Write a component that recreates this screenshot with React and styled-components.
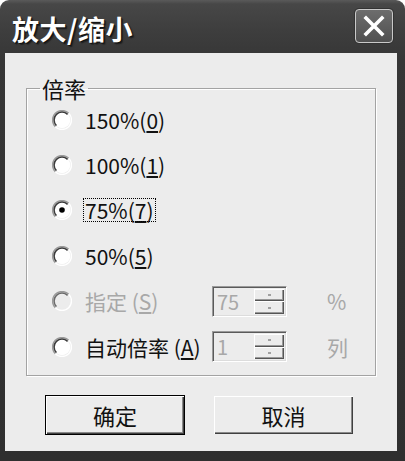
import React from "react";
import styled, { createGlobalStyle } from "styled-components";

const Global = createGlobalStyle`
  html, body { margin: 0; padding: 0; background: #fff; }
  body { font-family: "Noto Sans CJK SC", "Noto Sans", sans-serif; }
  * { box-sizing: border-box; }
`;

const Window = styled.div`
  width: 405px;
  height: 461px;
  display: flex;
  flex-direction: column;
  border-radius: 9px 9px 0 0;
  background: linear-gradient(#5a5a5a 0px, #474747 4px, #3e3e3e 30px, #363636 60px, #2f2f2f 100%);
  overflow: hidden;
`;

const TitleBar = styled.div`
  height: 53px;
  flex: none;
  display: flex;
  align-items: center;
  justify-content: space-between;
  padding: 0 12px 0 12px;
`;

const Title = styled.div`
  color: #fff;
  font-weight: 700;
  font-size: 27px;
  line-height: 30px;
  margin-top: 4px;
  letter-spacing: 0.5px;
  text-shadow: 1px 1px 0 #111, 2px 2px 1px #222;
`;

const CloseButton = styled.div`
  width: 38px;
  height: 34px;
  margin-top: -1px;
  border: 1.5px solid #c9c9c9;
  border-radius: 4px;
  background: linear-gradient(#6d6d6d, #505050);
  display: flex;
  align-items: center;
  justify-content: center;
  box-shadow: 0 0 0 1px #333;
`;

const Client = styled.div`
  flex: 1;
  margin: 0 8px 10px 5px;
  background: #ececec;
  padding: 23px 21px 0 21px;
  display: flex;
  flex-direction: column;
`;

const Group = styled.fieldset`
  margin: 0;
  height: 300px;
  width: 350px;
  padding: 0 0 0 25px;
  border: 1px solid #a3a3a3;
  box-shadow: 1px 1px 0 #fff, inset 1px 1px 0 #fff;
  min-inline-size: 0;
`;

const Legend = styled.legend`
  margin-left: -12px;
  padding: 0 2px;
  font-size: 22px;
  line-height: 24px;
  color: #111;
`;

const Rows = styled.div`
  margin-top: -3px;
  display: flex;
  flex-direction: column;
`;

const Row = styled.div`
  height: 45.4px;
  display: flex;
  align-items: center;
  font-size: 21px;
  color: ${(p) => (p.$disabled ? "#a8a8a8" : "#111")};
`;

const RadioBox = styled.span`
  width: 20px;
  height: 20px;
  flex: none;
  display: inline-flex;
  margin-right: 13px;
`;

const Label = styled.span`
  display: inline-block;
  white-space: nowrap;
  width: ${(p) => (p.$w ? `${p.$w}px` : "auto")};
  line-height: 22px;
  padding: 0 1px;
  margin-left: -1px;
  outline: ${(p) => (p.$focus ? "1px dotted #000" : "none")};
  outline-offset: 0px;
  u { text-underline-offset: 2px; }
`;

const Spin = styled.div`
  width: 75px;
  height: 31px;
  flex: none;
  display: flex;
  border-top: 1px solid #9a9a9a;
  border-left: 1px solid #9a9a9a;
  border-right: 1px solid #fff;
  border-bottom: 1px solid #fff;
  box-shadow: inset 1px 1px 0 #5a5a5a, inset -1px -1px 0 #dcdcdc;
  background: #ececec;
  padding: 2px;
`;

const SpinText = styled.div`
  flex: 1;
  color: #a8a8a8;
  font-size: 20px;
  line-height: 25px;
  padding-left: 2px;
`;

const SpinButtons = styled.div`
  width: 30px;
  display: flex;
  flex-direction: column;
`;

const SpinHalf = styled.div`
  flex: 1;
  background: #ececec;
  box-shadow: inset 1px 1px 0 #fff, inset -1px -1px 0 #555, inset -2px -2px 0 #999;
  display: flex;
  align-items: center;
  justify-content: center;
  &::after {
    content: "";
    width: 3px;
    height: 2px;
    background: #a0a0a0;
  }
`;

const Unit = styled.span`
  margin-left: 40px;
  color: #a8a8a8;
  font-size: 21px;
`;

const ButtonRow = styled.div`
  display: flex;
  gap: 28px;
  padding-left: 19px;
  margin-top: 19px;
`;

const Button = styled.div`
  width: ${(p) => (p.$w ? p.$w : 140)}px;
  height: 40px;
  display: flex;
  align-items: center;
  justify-content: center;
  font-size: 22px;
  color: #111;
  background: #ececec;
  border: 1px solid ${(p) => (p.$default ? "#000" : "#ececec")};
  box-shadow: inset 1px 1px 0 #fff, inset -1px -1px 0 #404040, inset -2px -2px 0 #8a8a8a;
`;

function Radio({ checked, disabled }) {
  return (
    <RadioBox>
      <svg width="20" height="20" viewBox="0 0 20 20">
        <circle cx="10" cy="10" r="8.3" fill={disabled ? "#ececec" : "#fff"} />
        <path d="M3.3 16.7 A9.4 9.4 0 0 1 16.7 3.3" stroke="#9a9a9a" strokeWidth="1.4" fill="none" />
        <path d="M4.4 15.6 A7.9 7.9 0 0 1 15.6 4.4" stroke={disabled ? "#6a6a6a" : "#3a3a3a"} strokeWidth="1.5" fill="none" />
        <path d="M16.7 3.3 A9.4 9.4 0 0 1 3.3 16.7" stroke="#fff" strokeWidth="1.4" fill="none" />
        {checked && <circle cx="10" cy="10" r="2.8" fill="#000" />}
      </svg>
    </RadioBox>
  );
}

function SpinBox({ value }) {
  return (
    <Spin>
      <SpinText>{value}</SpinText>
      <SpinButtons>
        <SpinHalf />
        <SpinHalf />
      </SpinButtons>
    </Spin>
  );
}

export default function App() {
  return (
    <>
      <Global />
      <Window>
        <TitleBar>
          <Title>放大/缩小</Title>
          <CloseButton>
            <svg width="22" height="22" viewBox="0 0 22 22">
              <path d="M3 3 L19 19 M19 3 L3 19" stroke="#fff" strokeWidth="3.6" strokeLinecap="square" />
            </svg>
          </CloseButton>
        </TitleBar>
        <Client>
          <Group>
            <Legend>倍率</Legend>
            <Rows>
              <Row>
                <Radio />
                <Label>150%(<u>0</u>)</Label>
              </Row>
              <Row>
                <Radio />
                <Label>100%(<u>1</u>)</Label>
              </Row>
              <Row>
                <Radio checked />
                <Label $focus>75%(<u>7</u>)</Label>
              </Row>
              <Row>
                <Radio />
                <Label>50%(<u>5</u>)</Label>
              </Row>
              <Row $disabled>
                <Radio disabled />
                <Label $w={128}>指定 (<u>S</u>)</Label>
                <SpinBox value="75" />
                <Unit>%</Unit>
              </Row>
              <Row>
                <Radio />
                <Label $w={128}>自动倍率 (<u>A</u>)</Label>
                <SpinBox value="1" />
                <Unit>列</Unit>
              </Row>
            </Rows>
          </Group>
          <ButtonRow>
            <Button $default>确定</Button>
            <Button $w={141}>取消</Button>
          </ButtonRow>
        </Client>
      </Window>
    </>
  );
}
